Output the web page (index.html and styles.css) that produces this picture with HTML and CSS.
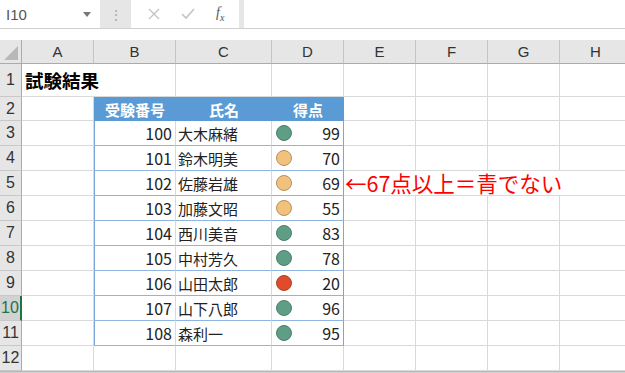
FILE: index.html
```html
<!DOCTYPE html>
<html lang="ja">
<head>
    <meta charset="UTF-8">
    <title>試験結果</title>
    <link rel="stylesheet" href="styles.css">
</head>
<body>
    <div class="formula-bar">
        <div class="name-box">
            <span class="name">I10</span>
            <svg class="drop" width="8" height="5" viewBox="0 0 8 5"><path d="M0 0h8L4 5z" fill="#777"/></svg>
        </div>
        <div class="grip">⋮</div>
        <div class="fx-buttons">
            <svg width="12" height="12" viewBox="0 0 12 12"><path d="M1 1l10 10M11 1L1 11" stroke="#c4c4c4" stroke-width="1.4"/></svg>
            <svg width="14" height="12" viewBox="0 0 14 12"><path d="M1 6l4 4 8-9" stroke="#c4c4c4" stroke-width="1.6" fill="none"/></svg>
            <span class="fx"><i>f</i><sub>x</sub></span>
        </div>
        <div class="formula-input"></div>
    </div>

    <div class="sheet">
        <div class="row col-head">
            <div class="corner"><span class="tri"></span></div>
            <div>A</div><div>B</div><div>C</div><div>D</div><div>E</div><div>F</div><div>G</div><div>H</div>
        </div>
        <div class="row r-title">
            <div class="rh">1</div>
            <div class="title">試験結果</div>
            <div></div><div></div><div></div><div></div><div></div><div></div><div></div>
        </div>
        <div class="row r-head">
            <div class="rh">2</div>
            <div></div>
            <div class="th">受験番号</div><div class="th">氏名</div><div class="th">得点</div>
            <div></div><div></div><div></div><div></div>
        </div>
        <div class="row"><div class="rh">3</div><div></div><div class="t id">100</div><div class="t nm">大木麻緒</div><div class="t sc"><span class="dot green"></span>99</div><div></div><div></div><div></div><div></div></div>
        <div class="row"><div class="rh">4</div><div></div><div class="t id">101</div><div class="t nm">鈴木明美</div><div class="t sc"><span class="dot amber"></span>70</div><div></div><div></div><div></div><div></div></div>
        <div class="row"><div class="rh">5</div><div></div><div class="t id">102</div><div class="t nm">佐藤岩雄</div><div class="t sc"><span class="dot amber"></span>69</div><div class="note">←67点以上＝青でない</div></div>
        <div class="row"><div class="rh">6</div><div></div><div class="t id">103</div><div class="t nm">加藤文昭</div><div class="t sc"><span class="dot amber"></span>55</div><div></div><div></div><div></div><div></div></div>
        <div class="row"><div class="rh">7</div><div></div><div class="t id">104</div><div class="t nm">西川美音</div><div class="t sc"><span class="dot green"></span>83</div><div></div><div></div><div></div><div></div></div>
        <div class="row"><div class="rh">8</div><div></div><div class="t id">105</div><div class="t nm">中村芳久</div><div class="t sc"><span class="dot green"></span>78</div><div></div><div></div><div></div><div></div></div>
        <div class="row"><div class="rh">9</div><div></div><div class="t id">106</div><div class="t nm">山田太郎</div><div class="t sc"><span class="dot red"></span>20</div><div></div><div></div><div></div><div></div></div>
        <div class="row"><div class="rh active">10</div><div></div><div class="t id">107</div><div class="t nm">山下八郎</div><div class="t sc"><span class="dot green"></span>96</div><div></div><div></div><div></div><div></div></div>
        <div class="row"><div class="rh">11</div><div></div><div class="t id">108</div><div class="t nm">森利一</div><div class="t sc"><span class="dot green"></span>95</div><div></div><div></div><div></div><div></div></div>
        <div class="row"><div class="rh">12</div><div></div><div></div><div></div><div></div><div></div><div></div><div></div><div></div></div>
    </div>
    <div class="bottom-bar"></div>
</body>
</html>
```

FILE: styles.css
```css
body {
    margin: 0;
    width: 625px;
    height: 373px;
    overflow: hidden;
    background: #fff;
    font-family: "Noto Sans CJK JP", "Noto Sans", sans-serif;
    color: #222;
}
.formula-bar {
    display: flex;
    height: 28px;
    background: #e6e6e6;
    border-bottom: 1px solid #d0d0d0;
    margin-bottom: 11px;
}
.name-box {
    width: 100px;
    background: #fff;
    display: flex;
    align-items: center;
    justify-content: space-between;
    padding: 0 9px 0 6px;
    box-sizing: border-box;
}
.name {
    font-family: "Liberation Sans", sans-serif;
    font-size: 15px;
    color: #555;
}
.grip {
    width: 31px;
    text-align: center;
    line-height: 28px;
    font-size: 14px;
    color: #aaa;
}
.fx-buttons {
    width: 108px;
    background: #fff;
    display: flex;
    align-items: center;
    justify-content: space-around;
    padding: 0 4px 0 6px;
    box-sizing: border-box;
}
.fx {
    font-family: "Liberation Serif", serif;
    font-size: 14px;
    color: #555;
}
.fx sub {
    font-size: 10px;
    font-style: italic;
}
.formula-input {
    flex: 1;
    margin-left: 5px;
    background: #fff;
}
.row {
    display: grid;
    grid-template-columns: 22px 72px 82px 96px 72px 72px 72px 72px 72px;
    height: 25px;
}
.row > div {
    box-sizing: border-box;
    border-right: 1px solid #d9d9d9;
    border-bottom: 1px solid #d9d9d9;
    font-size: 15px;
    line-height: 1;
    display: flex;
    align-items: center;
    white-space: nowrap;
}
.col-head {
    height: 24px;
    background: #e6e6e6;
}
.col-head > div {
    justify-content: center;
    font-family: "Liberation Sans", sans-serif;
    font-size: 15px;
    color: #333;
    border-right: 1px solid #c4c4c4;
    border-bottom: 1px solid #ababab;
}
.col-head > .corner {
    position: relative;
    border-right: 1px solid #ababab;
}
.tri {
    position: absolute;
    right: 3px;
    bottom: 3px;
    border-left: 14px solid transparent;
    border-bottom: 14px solid #b8b8b8;
}
.row > .rh {
    justify-content: center;
    background: #e6e6e6;
    font-family: "Liberation Sans", sans-serif;
    font-size: 16px;
    color: #333;
    border-right: 1px solid #ababab;
    border-bottom: 1px solid #c8c8c8;
}
.row > .rh.active {
    background: #d2d2d2;
    border-right: 2px solid #217346;
    color: #217346;
}
.r-title {
    height: 33px;
}
.r-title > .title {
    font-weight: bold;
    font-size: 18.5px;
    padding-left: 3px;
    color: #000;
    overflow: visible;
    border-right: none;
}
.r-head {
    height: 24px;
}
.row > .th {
    background: #5b9bd5;
    color: #fff;
    font-weight: bold;
    justify-content: center;
    border-right: none;
    border-bottom: none;
}
.row > .th:first-of-type {
    border-left: 1px solid #5b9bd5;
}
.row > .t {
    border-bottom: 1px solid #8db4e2;
    color: #222;
}
.row > .id {
    justify-content: flex-end;
    padding-right: 3px;
    border-left: 1px solid #7ba7d8;
    font-size: 16px;
}
.row > .nm {
    padding-left: 2px;
}
.row > .sc {
    justify-content: space-between;
    padding: 0 3px 0 3px;
    border-right: 1px solid #7ba7d8;
    font-size: 16px;
}
.dot {
    width: 14px;
    height: 14px;
    border-radius: 50%;
    border: 1px solid #6f6f6f;
    margin-left: 1px;
}
.green {
    background: #5e9e85;
    border-color: #4e7e6c;
}
.amber {
    background: #f2c27d;
    border-color: #b39060;
}
.red {
    background: #e04b2c;
    border-color: #a8432c;
}
.row > .note {
    grid-column: span 4;
    color: #ff0000;
    font-size: 21.5px;
    padding-left: 1px;
    border-right: none;
}
.bottom-bar {
    height: 3px;
    background: #d0d0d0;
    border-top: 1px solid #b8b8b8;
}
```
